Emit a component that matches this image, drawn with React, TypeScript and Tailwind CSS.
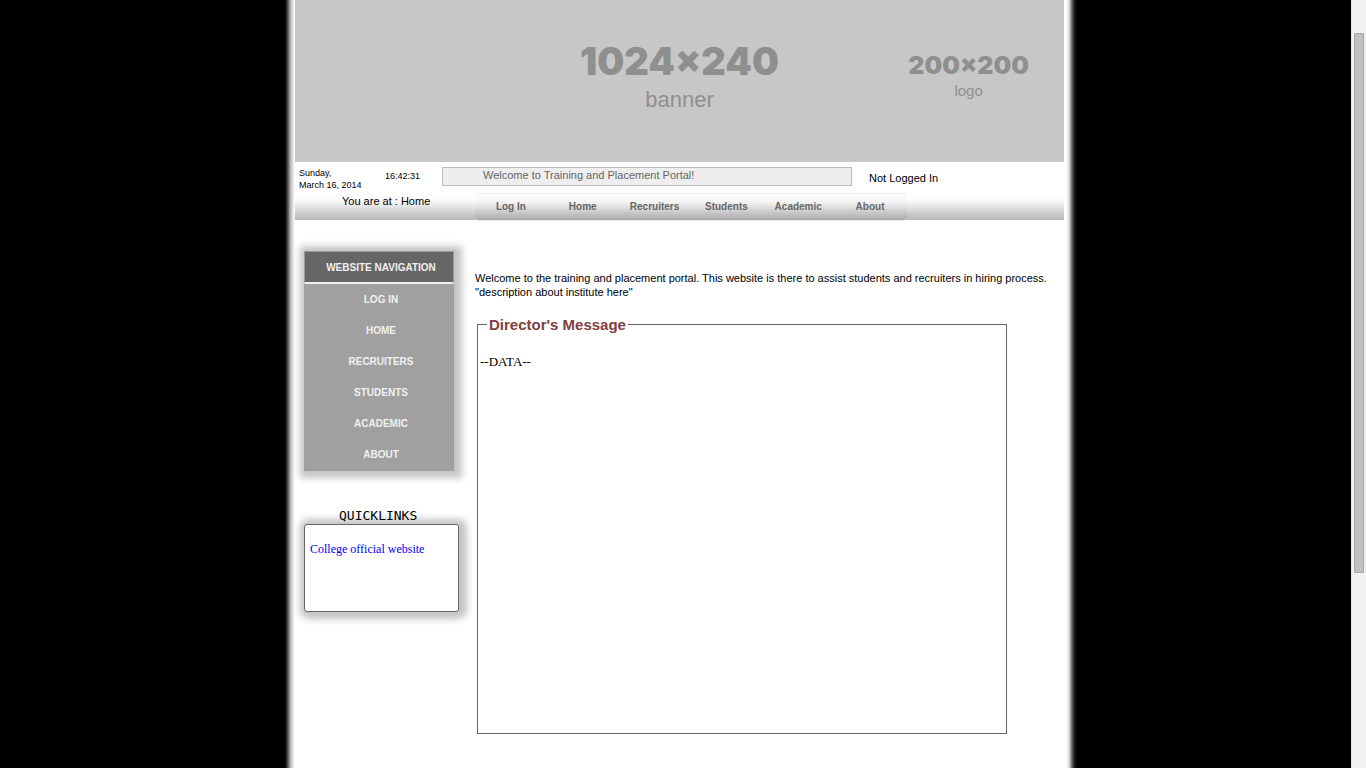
import React from "react";

const pages = ["Log In", "Home", "Recruiters", "Students", "Academic", "About"];

function Banner() {
  return (
    <header className="relative h-[162px] bg-[#c7c7c7] text-[#8f8f8f]">
      <div className="flex flex-col items-center pt-9">
        <strong className="font-['Inter',sans-serif] text-[38px] leading-[50px] font-black">1024×240</strong>
        <span className="text-[22px] leading-[27px]">banner</span>
      </div>
      <div className="absolute top-12 right-[35px] flex flex-col items-center">
        <strong className="font-['Inter',sans-serif] text-[25px] leading-[34px] font-black">200×200</strong>
        <span className="text-[15px] leading-[18px]">logo</span>
      </div>
    </header>
  );
}

function StatusBar() {
  return (
    <div className="flex h-[58px] bg-[linear-gradient(#fff_36px,#f4f4f4_40px,#b6b6b6)] text-[11px]">
      <div className="w-[147px] shrink-0 pt-1">
        <div className="flex pl-1 text-[9px] leading-3">
          <div className="w-[86px] pt-px">
            Sunday,
            <br />
            March 16, 2014
          </div>
          <time className="pt-1">16:42:31</time>
        </div>
        <p className="pt-1 pl-[47px] leading-3 whitespace-nowrap">You are at : Home</p>
      </div>
      <div className="flex-1 pt-[5px]">
        <div className="flex">
          <div className="h-[19px] w-[410px] border border-[#bdbdbd] bg-[#eee] pl-10 leading-[14px] text-[#666]">
            Welcome to Training and Placement Portal!
          </div>
          <p className="pl-[17px] leading-[22px]">Not Logged In</p>
        </div>
        <nav className="mt-1 ml-[33px] flex w-[432px] rounded-sm border-y border-[#ececec] bg-[linear-gradient(#fff,#f4f4f4_8px,#aaa)] pr-px text-[10px] leading-[26px] font-bold text-[#666]">
          {pages.map((page) => (
            <a key={page} href="#" className="flex-1 text-center">
              {page}
            </a>
          ))}
        </nav>
      </div>
    </div>
  );
}

function Sidebar() {
  return (
    <aside className="w-[180px] shrink-0 pt-[31px] pl-[9px]">
      <nav className="w-[150px] bg-[#a0a0a0] text-center text-[10px] font-bold text-[#f0f0f0] uppercase shadow-[2px_1px_7px_6px_#c4c4c4]">
        <h2 className="h-[33px] border border-b-2 border-[#999] border-b-[#eee] bg-[#666] pl-1 leading-8">
          Website Navigation
        </h2>
        <ul className="pb-px">
          {pages.map((page) => (
            <li key={page} className="pl-1 leading-[31px]">
              <a href="#">{page}</a>
            </li>
          ))}
        </ul>
      </nav>
      <section className="w-[155px] pt-9">
        <h2 className="relative z-10 pl-[35px] font-['DejaVu_Sans_Mono',monospace] text-[13px] leading-[17px]">QUICKLINKS</h2>
        <div className="h-[88px] rounded-[3px] border border-[#666] bg-white px-[5px] pt-4 font-['Liberation_Serif',serif] text-[12px] leading-4 text-[#0000ee] shadow-[2px_1px_7px_6px_#c4c4c4]">
          <a href="#">College official website</a>
        </div>
      </section>
    </aside>
  );
}

function Content() {
  return (
    <main className="flex-1 pt-[51px]">
      <p className="text-[11px] leading-[14px]">
        Welcome to the training and placement portal. This website is there to assist students and recruiters in hiring process.
        <br />
        "description about institute here"
      </p>
      <fieldset className="mt-[17px] mr-[57px] ml-[2px] min-h-[418px] border border-[#666] px-[2px]">
        <legend className="ml-[7px] px-[2px] text-[15px] leading-[17px] font-bold text-[#804040]">Director's Message</legend>
        <p className="pt-[21px] font-['Liberation_Serif',serif] text-[13px] leading-4">--DATA--</p>
      </fieldset>
    </main>
  );
}

export default function App() {
  return (
    <div className="flex min-h-screen bg-black font-['Liberation_Sans',sans-serif] text-black">
      <div className="flex flex-1 justify-center pl-[11px]">
        <div className="w-[792px] bg-[linear-gradient(90deg,#000,#555_3px,#aaa_5px,#e6e6e6_8px,#fff_10px,#fff_calc(100%-11px),#ddd_calc(100%-8px),#888_calc(100%-6px),#222_calc(100%-3px),#000)] pr-[13px] pl-[10px]">
          <Banner />
          <StatusBar />
          <div className="flex">
            <Sidebar />
            <Content />
          </div>
        </div>
      </div>
      <div aria-hidden="true" className="w-[15px] shrink-0 border-l border-[#e3e3e3] bg-[#f1f1f1] pt-[33px] pr-[2px] pl-[2px]">
        <div className="h-[540px] rounded-[1px] border border-[#a8a8a8] bg-[#c1c1c1]" />
      </div>
    </div>
  );
}
